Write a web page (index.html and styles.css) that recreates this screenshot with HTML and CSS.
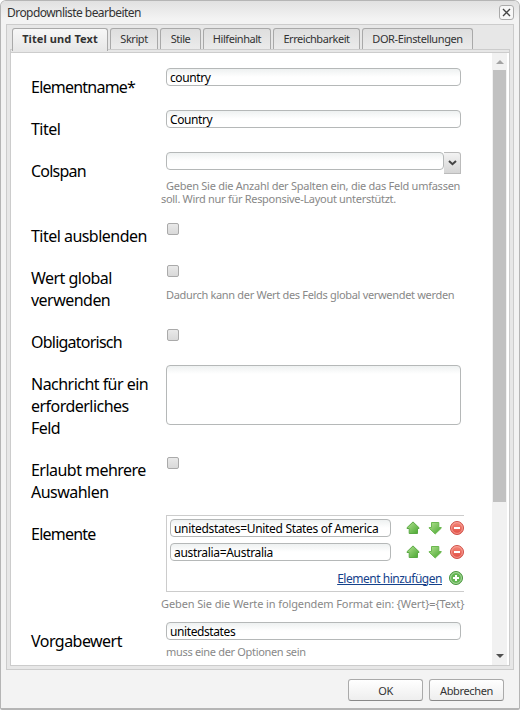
FILE: index.html
```html
<!DOCTYPE html>
<html lang="de">
<head>
<meta charset="utf-8">
<title>Dropdownliste bearbeiten</title>
<link rel="stylesheet" href="styles.css">
</head>
<body>
<svg class="defs" width="0" height="0" aria-hidden="true">
  <defs>
    <linearGradient id="green" x1="0" y1="0" x2="1" y2="1"><stop offset="0" stop-color="#b4e292"/><stop offset="1" stop-color="#45a52d"/></linearGradient>
    <linearGradient id="red" x1="0" y1="0" x2="0" y2="1"><stop offset="0" stop-color="#f58a7c"/><stop offset="1" stop-color="#e04a40"/></linearGradient>
    <symbol id="up" viewBox="0 0 14 14"><path d="M7 .9 13 6.7V7.5H11.5V12.5H3.2V7.5H1V6.7Z" fill="url(#green)" stroke="#5ba944"/></symbol>
    <symbol id="down" viewBox="0 0 14 14"><path d="M3.5 1.5H10.8V6.5H13.2V7.2L7.2 13 1.2 7.2V6.5H3.5Z" fill="url(#green)" stroke="#6cb850"/></symbol>
    <symbol id="remove" viewBox="0 0 14 14"><circle cx="7" cy="7" r="6.5" fill="url(#red)" stroke="#cf5149"/><circle cx="7" cy="7" r="5.4" fill="none" stroke="#f9b3aa" stroke-width=".7"/><path d="M4 7H10" stroke="#fff" stroke-width="2"/></symbol>
    <symbol id="add" viewBox="0 0 14 14"><circle cx="7" cy="7" r="6.5" fill="#62b552" stroke="#4b9540"/><circle cx="7" cy="7" r="5.4" fill="none" stroke="#b5dda9" stroke-width=".9"/><path d="M4 7H10M7 4V10" stroke="#fff" stroke-width="2"/></symbol>
  </defs>
</svg>
<div class="dialog">
  <header class="titlebar">
    <span class="title">Dropdownliste bearbeiten</span>
    <button class="close" aria-label="Schließen"><svg width="9" height="9" viewBox="0 0 9 9"><path d="M1 1 8 8M8 1 1 8" stroke="#444" stroke-width="1.4"/></svg></button>
  </header>
  <main class="frame">
    <nav class="tabs">
      <span class="tab active t1">Titel und Text</span><span class="tab t2">Skript</span><span class="tab t3">Stile</span><span class="tab t4">Hilfeinhalt</span><span class="tab t5">Erreichbarkeit</span><span class="tab t6">DOR-Einstellungen</span>
    </nav>
    <div class="panel">
      <form class="form">
        <div class="row"><label class="tight">Elementname*</label><div class="control"><div class="input">country</div></div></div>
        <div class="row"><label>Titel</label><div class="control"><div class="input">Country</div></div></div>
        <div class="row colspan"><label class="tight">Colspan</label><div class="control"><div class="combo"><div class="input"></div><span class="trigger"><svg width="9" height="6" viewBox="0 0 9 6"><path d="M1 1 4.5 4.2 8 1" fill="none" stroke="#444" stroke-width="2"/></svg></span></div><p class="hint outdent wrap">Geben Sie die Anzahl der Spalten ein, die das Feld umfassen<br><span class="second">soll. Wird nur für Responsive-Layout unterstützt.</span></p></div></div>
        <div class="row"><label>Titel ausblenden</label><div class="control"><span class="check"></span></div></div>
        <div class="row"><label>Wert global<br>verwenden</label><div class="control"><span class="check"></span><p class="hint below-check">Dadurch kann der Wert des Felds global verwendet werden</p></div></div>
        <div class="row"><label class="tight">Obligatorisch</label><div class="control"><span class="check"></span></div></div>
        <div class="row"><label>Nachricht für ein<br>erforderliches<br>Feld</label><div class="control"><div class="input area"></div></div></div>
        <div class="row"><label>Erlaubt mehrere<br>Auswahlen</label><div class="control"><span class="check"></span></div></div>
        <div class="row elements"><label class="tight">Elemente</label><div class="control">
          <div class="list">
            <div class="item"><div class="input">unitedstates=United States of America</div><svg><use href="#up"/></svg><svg><use href="#down"/></svg><svg><use href="#remove"/></svg></div>
            <div class="item"><div class="input">australia=Australia</div><svg><use href="#up"/></svg><svg><use href="#down"/></svg><svg><use href="#remove"/></svg></div>
            <div class="item add"><a>Element hinzufügen</a><svg><use href="#add"/></svg></div>
          </div>
          <p class="hint outdent format">Geben Sie die Werte in folgendem Format ein: {Wert}={Text}</p></div></div>
        <div class="row"><label>Vorgabewert</label><div class="control"><div class="input">unitedstates</div><p class="hint default-hint">muss eine der Optionen sein</p></div></div>
      </form>
      <div class="scrollbar"><i class="arrow-up"></i><div class="thumb"></div><i class="arrow-down"></i></div>
    </div>
  </main>
  <footer class="actions"><button>OK</button><button>Abbrechen</button></footer>
</div>
</body>
</html>
```
FILE: styles.css
```css
* { box-sizing: border-box; }
body { margin: 0; background: #fff; font: 11px "Noto Sans", "Open Sans", sans-serif; color: #333; }
.defs { display: block; position: absolute; }
.dialog { width: 520px; height: 710px; border: 1px solid #b5b5b5; border-bottom-width: 2px; border-radius: 6px 6px 2px 2px; background: #f3f3f3; padding: 0 5px; display: flex; flex-direction: column; overflow: hidden; }
.titlebar { height: 23px; margin: 0 -5px; padding: 0 5px 0 6px; display: flex; align-items: center; justify-content: space-between; background: linear-gradient(#e1e1e1, #f3f3f3 18px); }
.title { font-size: 12px; letter-spacing: -.55px; white-space: nowrap; }
.close { width: 15px; height: 15px; padding: 0; border: 1px solid #aaa; border-radius: 3px; background: #f7f7f7; display: grid; place-items: center; }
.frame { width: 508px; height: 646px; border: 1px solid #ccc; background: #e7e7e7; padding: 3px; display: flex; flex-direction: column; flex: none; }
.tabs { display: flex; gap: 2px; height: 21px; padding-left: 2px; }
.tab { height: 21px; border: 1px solid #a9a9a9; border-bottom: 0; border-radius: 3px 3px 0 0; background: linear-gradient(#dedede, #ebebeb); text-align: center; line-height: 20px; white-space: nowrap; letter-spacing: -.45px; }
.tab.active { height: 23px; background: linear-gradient(#f7f7f7, #e7e7e7); font-weight: 700; letter-spacing: .1px; z-index: 1; }
.t1 { width: 96px; } .t2 { width: 48px; } .t3 { width: 41px; } .t4 { width: 68px; } .t5 { width: 87px; } .t6 { width: 111px; }
.tab.t6 { letter-spacing: -.4px; }
.panel { width: 500px; height: 618px; border: 1px solid #ccc; background: #fff; display: flex; box-shadow: inset 0 2px #e7e7e7, inset 0 3px #ccc; }
.form { flex: 1; margin: 0; padding: 17px 0 0 20px; overflow: hidden; }
.row { display: flex; }
label { width: 135px; padding: 9px 0 11px; flex: none; font-size: 16px; line-height: 22px; letter-spacing: -.53px; color: #000; white-space: nowrap; }
label.tight { letter-spacing: -.77px; }
.control { width: 299px; padding-top: 1px; }
.input { width: 295px; height: 18px; border: 1px solid #b5b8b8; border-radius: 4px; background: linear-gradient(#eef1f1, #fff 8px); padding-left: 3px; font-size: 12px; line-height: 17px; letter-spacing: -.4px; color: #000; white-space: nowrap; flex: none; }
.combo { display: flex; height: 22px; }
.combo .input { width: 278px; }
.trigger { width: 17px; height: 22px; border: solid #bbb; border-width: 1px 1px 1px 0; border-radius: 0 3px 0 0; background: linear-gradient(#f3f3f3, #d5d5d5); display: grid; place-items: center; }
.colspan { height: 65px; }
.hint { margin: 0; font-size: 11px; line-height: 13px; letter-spacing: -.32px; color: #888; white-space: nowrap; }
.outdent { margin-left: -5px; }
.wrap { margin-top: 5px; text-indent: 5px; letter-spacing: -.26px; }
.second { letter-spacing: -.3px; }
.check { display: block; width: 12px; height: 12px; margin: 6px 0 0 1px; border: 1px solid #aaa; border-radius: 2px; background: linear-gradient(#e9e9e9, #d9d9d9); }
.below-check { margin-top: 11px; }
.area { height: 60px; }
.elements { height: 107px; }
.list { width: 298px; height: 77px; border: 1px solid #ccc; border-right: 0; padding-left: 3px; }
.item { display: flex; align-items: center; height: 24px; }
.item .input { width: 221px; margin-right: 15px; letter-spacing: -.32px; }
.item svg { width: 14px; height: 14px; margin-right: 8px; flex: none; }
.item svg:last-child { margin: 0; }
.item.add { height: 28px; justify-content: flex-end; gap: 7px; padding-right: 1px; }
.item a { font-size: 12px; letter-spacing: -.48px; color: #15428b; text-decoration: underline; }
.format { margin-top: 5px; letter-spacing: -.11px; }
.default-hint { margin-top: 5px; }
.scrollbar { width: 15px; margin: 3px 2px 0 0; background: #f1f1f1; display: flex; flex-direction: column; align-items: center; flex: none; }
.arrow-up { border: 4px solid transparent; border-top: 0; border-bottom-color: #a3a3a3; margin: 7px 0 6px; }
.arrow-down { border: 4px solid transparent; border-bottom: 0; border-top-color: #505050; margin: auto 0 7px; }
.thumb { width: 13px; height: 432px; background: #c1c1c1; }
.actions { display: flex; justify-content: flex-end; gap: 6px; padding: 9px 10px 0 0; }
.actions button { width: 75px; height: 22px; padding: 0; border: 1px solid #aaa; border-bottom-color: #888; border-radius: 3px; background: linear-gradient(#fff, #eee); font: inherit; letter-spacing: -.35px; color: #333; }
```
